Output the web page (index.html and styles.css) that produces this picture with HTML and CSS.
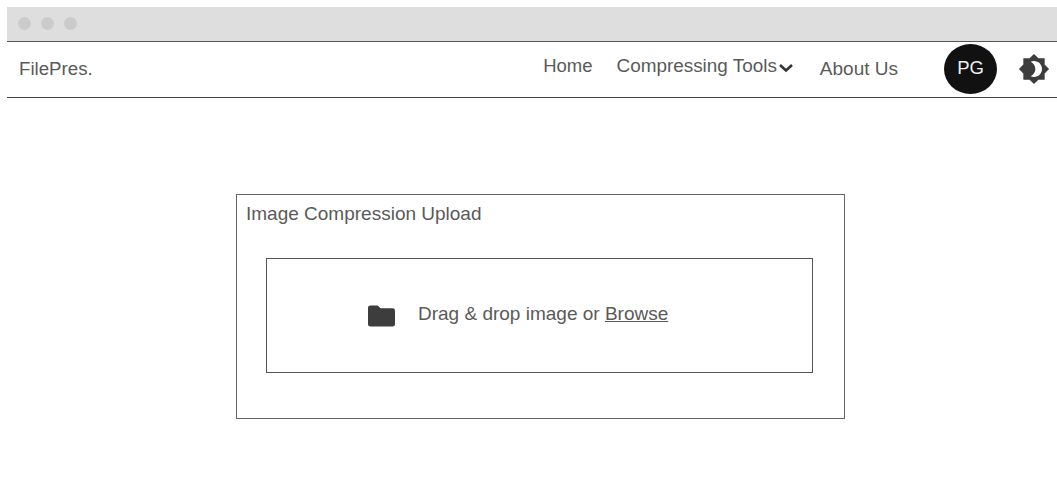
FILE: index.html
```html
<!DOCTYPE html>
<html lang="en">
<head>
<meta charset="utf-8">
<title>FilePres.</title>
<link rel="stylesheet" href="styles.css">
</head>
<body>
<div class="window">
  <div class="titlebar">
    <span class="dot"></span><span class="dot"></span><span class="dot"></span>
  </div>
  <nav class="navbar">
    <a class="brand">FilePres.</a>
    <div class="links">
      <a class="link link-home">Home</a>
      <a class="link link-tools">Compressing Tools<svg class="chevron" viewBox="0 0 16 10" width="16" height="10"><path d="M2 2l6 5.500 6-5.500" fill="none" stroke="#333" stroke-width="2.600"/></svg></a>
      <a class="link link-about">About Us</a>
    </div>
    <div class="avatar">PG</div>
    <svg class="theme" viewBox="0 0 24 24" width="32" height="32">
      <path fill="#3d3d3d" fill-rule="evenodd" d="M20 8.690V4h-4.690L12 .69 8.690 4H4v4.690L.69 12 4 15.310V20h4.690L12 23.310 15.310 20H20v-4.690L23.310 12 20 8.690zM12 18c-.89 0-1.740-.2-2.500-.55C11.560 16.500 13 14.420 13 12s-1.440-4.500-3.500-5.450C10.260 6.200 11.110 6 12 6c3.310 0 6 2.690 6 6s-2.690 6-6 6z"/>
    </svg>
  </nav>
  <main class="content">
    <section class="card">
      <h1 class="card-title">Image Compression Upload</h1>
      <div class="dropzone">
        <svg class="folder" viewBox="0 0 28 22" width="27" height="22"><path fill="#3d3d3d" d="M2.500 0h7.500l3 3h12.500a2.500 2.500 0 0 1 2.500 2.500v14a2.500 2.500 0 0 1-2.500 2.500h-23a2.500 2.500 0 0 1-2.500-2.500v-17a2.500 2.500 0 0 1 2.500-2.500z"/></svg>
        <p class="drop-text">Drag &amp; drop image or <a class="browse">Browse</a></p>
      </div>
    </section>
  </main>
</div>
</body>
</html>
```
FILE: styles.css
```css
* {
  box-sizing: border-box;
}

html,
body {
  margin: 0;
  height: 100%;
  background: #fff;
}

body {
  padding: 7px 0 0 7px;
  overflow: hidden;
  font-family: "Liberation Sans", Arial, sans-serif;
  font-size: 19px;
  color: #5a5a5a;
}

.titlebar {
  display: flex;
  align-items: center;
  gap: 10px;
  height: 35px;
  padding: 0 0 2px 11px;
  background: #dedede;
  border-bottom: 1px solid #555;
}

.dot {
  width: 13px;
  height: 13px;
  border-radius: 50%;
  background: #cbcbcb;
}

.navbar {
  display: flex;
  align-items: center;
  height: 56px;
  padding: 0 7px 2px 12px;
  border-bottom: 1px solid #444;
}

.brand {
  margin-top: 1px;
  font-size: 18.7px;
}

.links {
  display: flex;
  align-items: center;
  gap: 24px;
  margin-left: auto;
}

.link {
  display: flex;
  align-items: center;
}

.link-home,
.link-tools {
  margin-top: -5px;
}

.link-home {
  font-size: 18.500px;
}

.link-tools {
  font-size: 18.900px;
  margin-right: 2px;
}

.chevron {
  margin: 3px 0 0 1px;
}

.avatar {
  display: flex;
  align-items: center;
  justify-content: center;
  width: 53px;
  height: 50px;
  margin-left: 46px;
  padding-bottom: 2px;
  border-radius: 50%;
  background: #111;
  color: #eee;
  font-size: 18.5px;
}

.theme {
  margin-left: 21px;
}

.content {
  display: flex;
  justify-content: center;
  padding: 96px 0 0 17px;
}

.card {
  width: 609px;
  height: 225px;
  padding: 9px 9px 0;
  border: 1px solid #666;
}

.card-title {
  margin: 0;
  font-size: 19px;
  font-weight: 400;
  line-height: 20px;
}

.dropzone {
  display: flex;
  align-items: center;
  gap: 23px;
  width: 547px;
  height: 115px;
  margin: 34px 0 0 20px;
  padding: 0 0 3px 101px;
  border: 1px solid #555;
}

.folder {
  margin-top: 4px;
}

.drop-text {
  margin: 0;
}

.browse {
  text-decoration: underline;
}
```
